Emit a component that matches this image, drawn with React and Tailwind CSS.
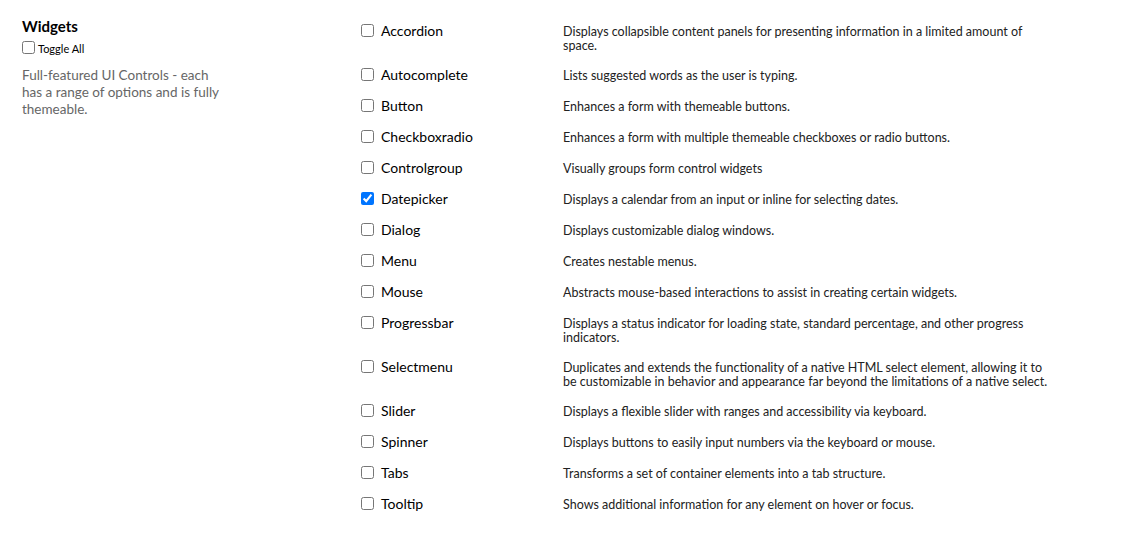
import React, { useState } from 'react';

// long descriptions are kept as the lines they wrap into
const widgets = [
    { name: 'Accordion', desc: ['Displays collapsible content panels for presenting information in a limited amount of', 'space.'] },
    { name: 'Autocomplete', desc: ['Lists suggested words as the user is typing.'] },
    { name: 'Button', desc: ['Enhances a form with themeable buttons.'] },
    { name: 'Checkboxradio', desc: ['Enhances a form with multiple themeable checkboxes or radio buttons.'] },
    { name: 'Controlgroup', desc: ['Visually groups form control widgets'] },
    { name: 'Datepicker', desc: ['Displays a calendar from an input or inline for selecting dates.'] },
    { name: 'Dialog', desc: ['Displays customizable dialog windows.'] },
    { name: 'Menu', desc: ['Creates nestable menus.'] },
    { name: 'Mouse', desc: ['Abstracts mouse-based interactions to assist in creating certain widgets.'] },
    { name: 'Progressbar', desc: ['Displays a status indicator for loading state, standard percentage, and other progress', 'indicators.'] },
    { name: 'Selectmenu', desc: ['Duplicates and extends the functionality of a native HTML select element, allowing it to', 'be customizable in behavior and appearance far beyond the limitations of a native select.'] },
    { name: 'Slider', desc: ['Displays a flexible slider with ranges and accessibility via keyboard.'] },
    { name: 'Spinner', desc: ['Displays buttons to easily input numbers via the keyboard or mouse.'] },
    { name: 'Tabs', desc: ['Transforms a set of container elements into a tab structure.'] },
    { name: 'Tooltip', desc: ['Shows additional information for any element on hover or focus.'] }
];

const App = () => {
    const [checked, setChecked] = useState({ Datepicker: true });

    const toggle = (name) => {
        setChecked(prev => ({ ...prev, [name]: !prev[name] }));
    };

    const toggleAll = (e) => {
        const value = e.target.checked;
        const next = {};
        widgets.forEach(w => { next[w.name] = value; });
        setChecked(next);
    };

    const allChecked = widgets.every(w => checked[w.name]);

    return (
        <div className="flex bg-white min-h-[533px] text-[#222] font-['Lato','Liberation_Sans',sans-serif]">
            <div className="w-[361px] shrink-0 pl-[22px] pt-[17px]">
                <h2 className="text-[15px] leading-[18px] font-bold text-black">Widgets</h2>
                <label className="flex items-center mt-[4px] text-[11px] leading-[14px] text-black">
                    <input
                        type="checkbox"
                        checked={allChecked}
                        onChange={toggleAll}
                        className="m-0 w-[13px] h-[13px]"
                    />
                    <span className="ml-[3px] mt-[3px]">Toggle All</span>
                </label>
                <p className="mt-[11px] w-[205px] text-[13.5px] leading-[17px] text-[#666]">
                    Full-featured UI Controls - each has a range of options and is fully themeable.
                </p>
            </div>

            <div className="pt-[15px]">
                {widgets.map(w => (
                    <div key={w.name} className="flex items-start py-[7px]">
                        <label className="flex items-center w-[202px] shrink-0 text-[14px] leading-[17px] text-black">
                            <input
                                type="checkbox"
                                checked={!!checked[w.name]}
                                onChange={() => toggle(w.name)}
                                className="m-0 w-[13px] h-[13px]"
                            />
                            <span className="ml-[7px]">{w.name}</span>
                        </label>
                        <div className="mt-[3px] -mb-[1px] text-[12.5px] leading-[14px] text-[#222]">
                            {w.desc.map(line => (
                                <div key={line} className="whitespace-nowrap">{line}</div>
                            ))}
                        </div>
                    </div>
                ))}
            </div>
        </div>
    );
};

export default App;
